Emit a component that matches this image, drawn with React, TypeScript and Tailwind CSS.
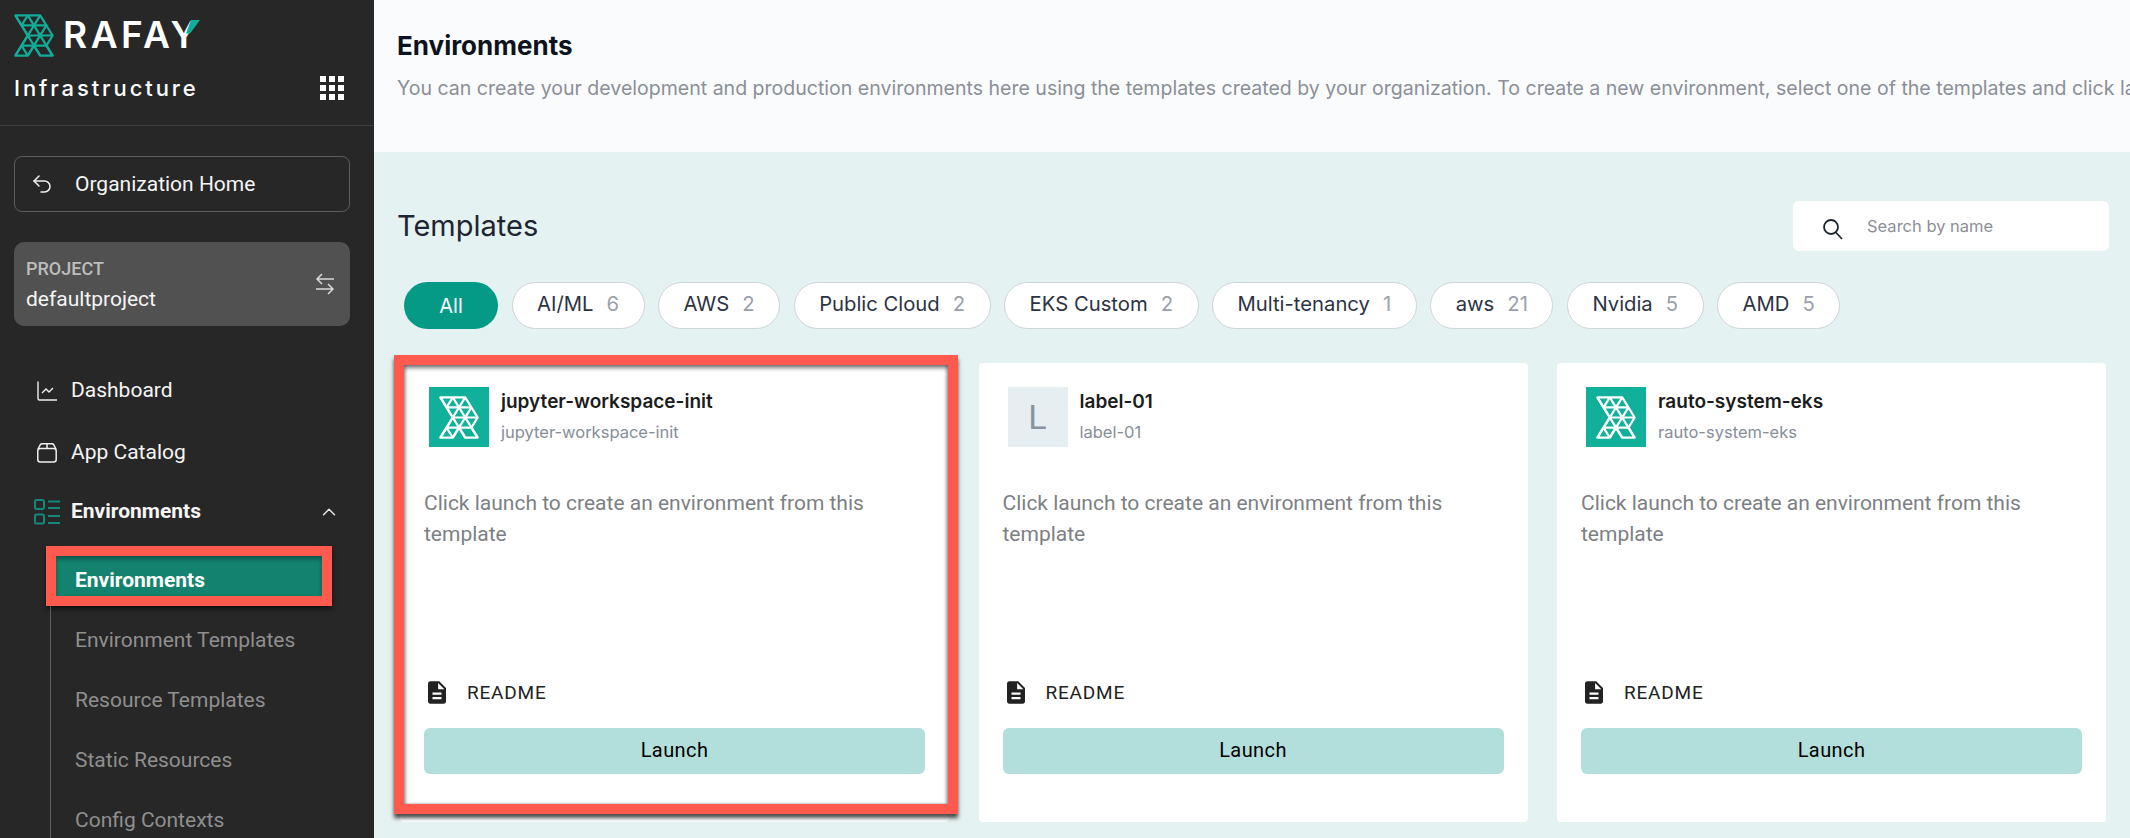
import React from "react";
import { Undo2, ChevronUp } from "lucide-react";

const F = "[font-family:Roboto,'Liberation_Sans',sans-serif]";
const I = "[font-family:Inter,'Liberation_Sans',sans-serif]";

function Mark({ color, className }: { color: string; className: string }) {
  const lines = [
    "M0 0L74 0L111 60L92.5 90L111 120L74 120L55.5 90L37 120L0 120L37 60Z",
    "M18.5 30H92.5M37 60H111M18.5 90H92.5",
    "M37 0L111 120M0 0L74 120M18.5 90L37 120",
    "M37 0L18.5 30M74 0L0 120M92.5 30L37 120",
  ];
  return (
    <svg viewBox="-4 -4 119 128" className={className} fill="none" stroke={color} strokeWidth={6.5} strokeLinejoin="round">
      {lines.map((d) => (
        <path key={d} d={d} />
      ))}
    </svg>
  );
}

function NavRow({ icon, label, bold }: { icon: React.ReactNode; label: string; bold?: boolean }) {
  return (
    <div className="flex h-full items-center">
      <div className="flex w-[71px] shrink-0 justify-end pr-[14px]">{icon}</div>
      <span className={`text-[21px] text-[#f5f5f5] ${bold ? "font-bold" : ""}`}>{label}</span>
    </div>
  );
}

function Sidebar() {
  return (
    <aside className="flex h-full w-[374px] shrink-0 flex-col overflow-hidden bg-[#272727]">
      <div className="flex h-[126px] shrink-0 flex-col border-b border-[#3f3f3f] pr-[30px] pl-[14px] pt-[14px]">
        <div className="flex h-[42px] items-center gap-[9px]">
          <Mark color="#12ad98" className="h-[43px] w-[40px] shrink-0" />
          <div className="relative">
            <span className="text-[37px] leading-none font-semibold tracking-[3.5px] text-white [font-family:Inter,sans-serif]">RAFAY</span>
            <svg viewBox="0 0 14 16" className="absolute top-[4px] right-[0px] h-[16px] w-[14px]">
              <path d="M5 0H14L4 13.5H0Z" fill="#12ad98" />
            </svg>
          </div>
        </div>
        <div className="mt-[17px] flex items-center justify-between">
          <span className="text-[22px] leading-[30px] font-medium tracking-[2.9px] text-white [font-family:Inter,sans-serif]">Infrastructure</span>
          <div className="grid grid-cols-3 gap-[3px]">
            {Array.from({ length: 9 }).map((_, i) => (
              <span key={i} className="h-[6px] w-[6px] bg-white" />
            ))}
          </div>
        </div>
      </div>

      <div className="mt-[30px] mr-[24px] ml-[14px] flex h-[56px] shrink-0 items-center rounded-[8px] border border-[#5c5c5c] pl-[15px]">
        <Undo2 size={24} strokeWidth={1.5} className="text-[#f0f0f0]" />
        <span className="ml-[21px] pt-[1px] text-[21px] text-[#f5f5f5]">Organization Home</span>
      </div>

      <div className="mt-[30px] mr-[24px] ml-[14px] flex h-[84px] shrink-0 items-center justify-between rounded-[10px] bg-[#515151] pr-[15px] pl-[12px]">
        <div className="flex flex-col pt-[2px]">
          <span className="text-[18px] leading-[22px] font-medium text-[#bdbdbd]">PROJECT</span>
          <span className="mt-[6px] text-[21px] leading-[26px] text-[#f5f5f5]">defaultproject</span>
        </div>
        <svg viewBox="0 0 20 22" className="h-[22px] w-[20px]" fill="none" stroke="#d8d8d8" strokeWidth={1.5}>
          <path d="M19 6H2M7 1L2 6L7 11" />
          <path d="M1 16H18M13 11L18 16L13 21" />
        </svg>
      </div>

      <div className="mt-[34px] h-[60px] shrink-0 pt-[1px]">
        <NavRow
          label="Dashboard"
          icon={
            <svg viewBox="0 0 20 20" className="h-[20px] w-[20px]" fill="none" stroke="#f0f0f0" strokeWidth={1.4}>
              <path d="M1 0.5V17.5C1 18.5 1.5 19 2.5 19H20" />
              <path d="M5 12L9 8L12 11L16 7" />
            </svg>
          }
        />
      </div>
      <div className="mt-[2px] h-[60px] shrink-0 pt-[1px]">
        <NavRow
          label="App Catalog"
          icon={
            <svg viewBox="0 0 20 20" className="h-[20px] w-[20px]" fill="none" stroke="#f0f0f0" strokeWidth={1.5}>
              <rect x="0.8" y="5.5" width="18.4" height="13.5" rx="2.5" />
              <path d="M1 6L3.5 1.5C3.8 1 4.2 0.8 5 0.8H15C15.8 0.8 16.2 1 16.5 1.5L19 6M10 1V6" />
            </svg>
          }
        />
      </div>
      <div className="relative flex h-[56px] shrink-0 items-center pt-[3px]">
        <NavRow
          bold
          label="Environments"
          icon={
            <svg viewBox="0 0 26 26" className="h-[26px] w-[26px] translate-x-[3px]" fill="none" stroke="#14897a" strokeWidth={2}>
              <rect x="1" y="1" width="9" height="9" rx="1.5" />
              <rect x="1" y="15.5" width="9" height="9" rx="1.5" />
              <path d="M14 2.5H26M14 9H26M14 17H26M14 24H26" />
            </svg>
          }
        />
        <ChevronUp size={22} strokeWidth={1.6} className="absolute right-[34px] text-[#e8e8e8]" />
      </div>

      <div className="mt-[8px] ml-[46px] flex h-[60px] w-[286px] shrink-0 items-center border-[10px] border-[#ff5a4d] bg-[#13826f] pt-[9px] pl-[19px] shadow-[0_3px_5px_rgba(0,0,0,0.55),inset_0_3px_4px_rgba(0,0,0,0.35)]">
        <span className="text-[21px] font-bold text-white">Environments</span>
      </div>
      <div className="ml-[50px] flex-1 border-l border-[#5d5d5d] pt-[5px] pl-[24px] text-[21px] text-[#8f8f8f]">
        {["Environment Templates", "Resource Templates", "Static Resources", "Config Contexts"].map((t) => (
          <div key={t} className="flex h-[60px] items-center">
            {t}
          </div>
        ))}
      </div>
    </aside>
  );
}

const chips: [string, string][] = [
  ["AI/ML", "6"],
  ["AWS", "2"],
  ["Public Cloud", "2"],
  ["EKS Custom", "2"],
  ["Multi-tenancy", "1"],
  ["aws", "21"],
  ["Nvidia", "5"],
  ["AMD", "5"],
];

function Card({ title, icon, highlighted }: { title: string; icon: "mark" | "L"; highlighted?: boolean }) {
  return (
    <div className="relative flex h-[459px] flex-col rounded-[4px] bg-white px-[24px]">
      {highlighted && (
        <div className="absolute -top-[8px] -right-[9px] bottom-[8px] -left-[6px] border-[10px] border-[#ff5a4d] shadow-[0_4px_4px_rgba(0,0,0,0.7),inset_0_3px_4px_rgba(0,0,0,0.5),inset_2px_0_3px_rgba(0,0,0,0.2),inset_-2px_0_3px_rgba(0,0,0,0.2)]" />
      )}
      <div className="mt-[24px] flex h-[60px] pl-[5px]">
        {icon === "mark" ? (
          <div className="flex h-[60px] w-[60px] items-center justify-center bg-[#10b09a]">
            <Mark color="#ffffff" className="h-[43px] w-[40px]" />
          </div>
        ) : (
          <div className="flex h-[60px] w-[60px] items-center justify-center bg-[#e6eef1] text-[34px] text-[#8a939d]">L</div>
        )}
        <div className={`ml-[12px] flex flex-col ${I}`}>
          <span className="mt-[2px] text-[19px] leading-[26px] font-semibold text-[#1c1c1c]">{title}</span>
          <span className="mt-[5px] text-[16.5px] leading-[24px] text-[#868e99]">{title}</span>
        </div>
      </div>
      <p className="mt-[41px] text-[21px] leading-[31px] text-[#7c7f84]">
        Click launch to create an environment from this template
      </p>
      <div className="mt-auto flex items-center pl-[4px]">
        <svg viewBox="4 2 16 20" className="h-[23px] w-[18px]" fill="#222222">
          <path d="M14 2H6c-1.1 0-2 .9-2 2v16c0 1.1.9 2 2 2h12c1.1 0 2-.9 2-2V8l-6-6zm2 16H8v-2h8v2zm0-4H8v-2h8v2zm-3-5V3.5L18.5 9H13z" />
        </svg>
        <span className="ml-[21px] text-[19px] tracking-[0.8px] text-[#222222]">README</span>
      </div>
      <button className="mt-[21px] mb-[48px] h-[46px] w-full rounded-[6px] bg-[#b2dfdb] pb-[2px] text-[20px] tracking-[0.4px] text-black">
        Launch
      </button>
    </div>
  );
}

export default function App() {
  return (
    <div className={`flex h-[838px] w-[2130px] overflow-hidden ${F}`}>
      <Sidebar />
      <main className="flex min-w-0 flex-1 flex-col bg-[#e4f2f1]">
        <header className={`h-[152px] shrink-0 overflow-hidden bg-[#fafbfd] pt-[28px] pl-[23px] ${I}`}>
          <h1 className="text-[26px] leading-[36px] font-bold text-[#0d1220]">Environments</h1>
          <p className="mt-[10px] text-[19.55px] leading-[28px] whitespace-nowrap text-[#8a8f98]">
            You can create your development and production environments here using the templates created by your organization. To create a new environment, select one of the templates and click launch.
          </p>
        </header>
        <div className={`mt-[49px] flex h-[50px] shrink-0 items-center justify-between pr-[21px] pl-[23px] ${I}`}>
          <h2 className="text-[29px] font-normal text-[#1f2530]">Templates</h2>
          <div className="flex h-[50px] w-[316px] items-center rounded-[6px] bg-white pl-[29px]">
            <svg viewBox="0 0 22 22" className="mt-[5px] h-[22px] w-[22px]" fill="none" stroke="#1f2530" strokeWidth={1.8}>
              <circle cx="9" cy="9" r="7" />
              <path d="M14 14.5L20 21" />
            </svg>
            <span className="ml-[23px] text-[16.5px] text-[#8b8f96]">Search by name</span>
          </div>
        </div>
        <div className={`mt-[31px] ml-[30px] flex h-[47px] shrink-0 gap-[13.5px] ${I}`}>
          <div className="flex w-[94px] items-center justify-center rounded-full bg-[#049a86] text-[20px] text-white">All</div>
          {chips.map(([l, n]) => (
            <div key={l} className="flex items-center gap-[13px] rounded-full border border-[#cfd4da] bg-white px-[24.5px] pb-[2px] text-[20.25px]">
              <span className="text-[#2c3345]">{l}</span>
              <span className="text-[#9aa0ab]">{n}</span>
            </div>
          ))}
        </div>
        <div className="mt-[34px] ml-[26px] grid h-[459px] w-[1706px] grid-cols-3 gap-[29.5px]">
          <Card title="jupyter-workspace-init" icon="mark" highlighted />
          <Card title="label-01" icon="L" />
          <Card title="rauto-system-eks" icon="mark" />
        </div>
      </main>
    </div>
  );
}
